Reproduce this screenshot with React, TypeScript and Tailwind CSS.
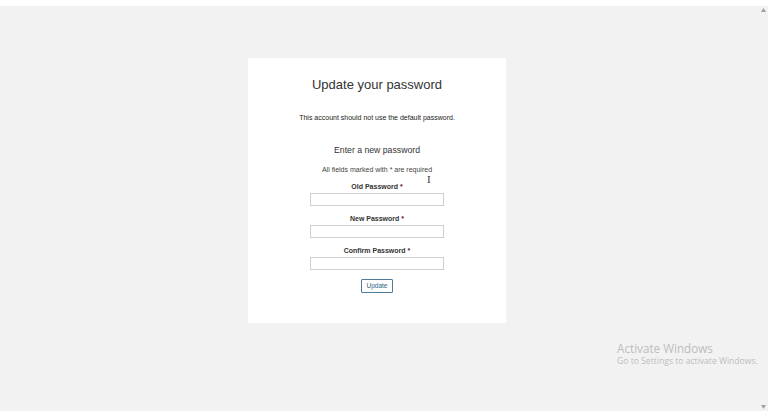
import React from 'react';

const fields = ['Old Password', 'New Password', 'Confirm Password'];

export default function App() {
  return (
    <div
      className="w-[775px] h-[419px] bg-white flex flex-col overflow-hidden relative"
      style={{ fontFamily: '"Liberation Sans", Arial, sans-serif' }}
    >
      <div className="h-[6px] shrink-0" />
      <div className="flex h-[405px] shrink-0">
        {/* page area */}
        <div className="flex-1 bg-[#f2f2f2] pt-[52px] pl-[248px]">
          <div className="w-[258px] h-[265px] bg-white flex flex-col items-center text-[#222]">
            <h1 className="mt-[18px] text-[13px] leading-[18px] text-[#333]">Update your password</h1>
            <p className="mt-[19px] text-[7px] leading-[9px]">This account should not use the default password.</p>
            <h2 className="mt-[22px] text-[8.7px] leading-[12px] text-[#333]">Enter a new password</h2>
            <p className="mt-[9px] text-[7px] leading-[9px] text-[#444]">All fields marked with * are required</p>
            {fields.map((f) => (
              <div key={f} className="mt-[8px] flex flex-col items-center">
                <label className="text-[7px] leading-[9px] font-bold text-[#333]">
                  {f} <span className="text-[#5a2a2a]">*</span>
                </label>
                <input
                  type="password"
                  className="mt-[2px] w-[134px] h-[13px] border border-[#cfcfcf] bg-white outline-none"
                />
              </div>
            ))}
            <button className="mt-[9px] w-[32px] h-[14px] border border-[#4d7c9c] rounded-[1px] bg-white text-[6.5px] leading-[12px] text-[#2f5f82]">
              Update
            </button>
          </div>
        </div>
        {/* scrollbar */}
        <div className="w-[9px] bg-[#f2f2f2] flex flex-col items-center justify-between py-[2px]">
          <svg width="5" height="4" viewBox="0 0 5 4">
            <path d="M0 4 L2.5 0 L5 4 Z" fill="#a0a0a0" />
          </svg>
          <svg width="5" height="4" viewBox="0 0 5 4">
            <path d="M0 0 L2.5 4 L5 0 Z" fill="#a0a0a0" />
          </svg>
        </div>
        <div className="w-[7px]" />
      </div>

      {/* text cursor */}
      <div
        className="absolute left-[427px] top-[172px] text-[11px] leading-[14px] text-[#333]"
        style={{ fontFamily: '"Liberation Serif", serif' }}
      >
        I
      </div>

      {/* activation watermark */}
      <div
        className="absolute left-[617px] top-[340px] text-[#bdbdbd] pointer-events-none"
        style={{ fontFamily: '"Open Sans", "Noto Sans", sans-serif' }}
      >
        <div className="text-[11.7px] leading-[16px]">Activate Windows</div>
        <div className="text-[8.6px] leading-[11px]">Go to Settings to activate Windows.</div>
      </div>
    </div>
  );
}
